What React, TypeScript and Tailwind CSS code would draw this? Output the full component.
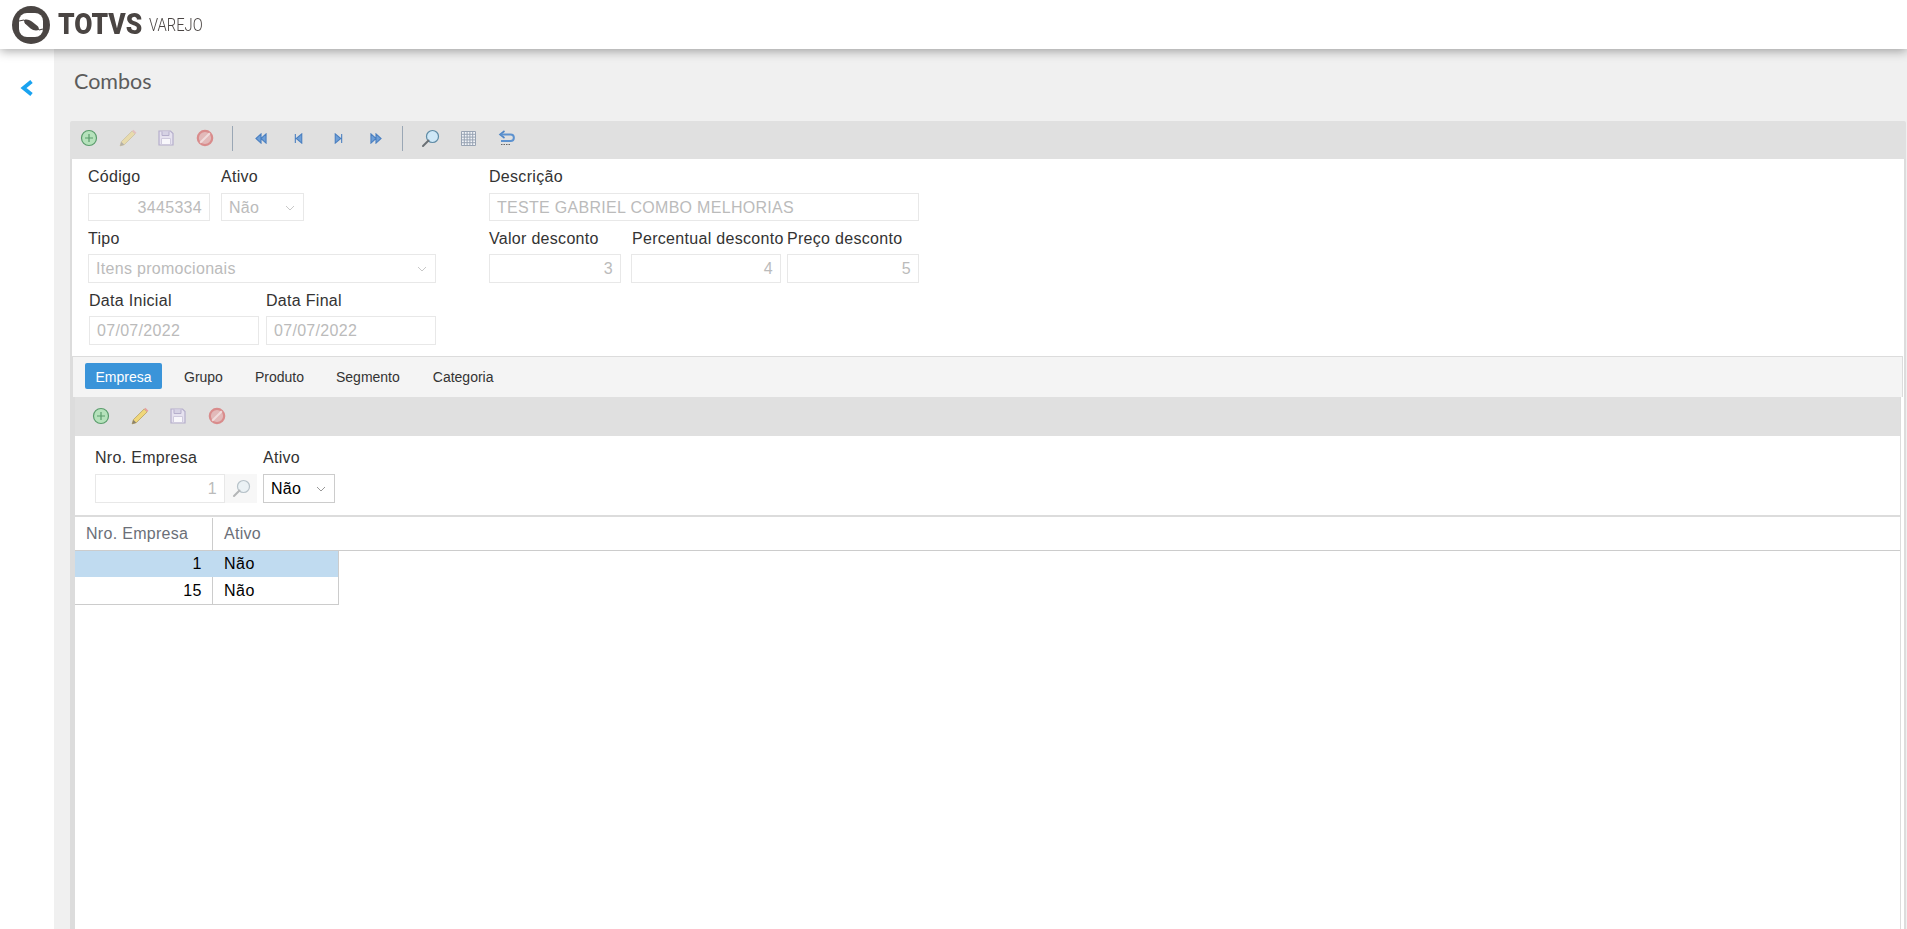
import type { ReactNode } from "react";

const PlusIcon = () => (
  <svg width="18" height="18" viewBox="0 0 18 18">
    <circle cx="9" cy="9" r="7.5" fill="#b5e2bb" stroke="#5a9c6c" strokeWidth="1.2" />
    <path d="M9 5v8M5 9h8" stroke="#5a9c6c" strokeWidth="1.2" />
  </svg>
);

const PencilIcon = ({ faded }: { faded?: boolean }) => (
  <svg width="20" height="20" viewBox="0 0 19 19" className={faded ? "opacity-50" : ""}>
    <path d="M2 17l1.2-4L13.5 2.8l2.8 2.8L6 15.8z" fill="#f0d77a" stroke="#b9a565" strokeWidth="0.8" />
    <path d="M13.5 2.8l1.2-1.2 2.8 2.8-1.2 1.2z" fill="#e8a0a0" />
    <path d="M2 17l1.2-4 2.8 2.8z" fill="#8a8270" />
  </svg>
);

const SaveIcon = () => (
  <svg width="16" height="16" viewBox="0 0 16 16">
    <path d="M1 1h11.5L15 3.5V15H1z" fill="#e6e2ef" stroke="#b5aecb" strokeWidth="1.2" />
    <path d="M4 1.5v4h7v-4" fill="#d6d2e4" stroke="#b5aecb" />
    <path d="M3.5 8.5h9v6h-9z" fill="#f8f7fb" stroke="#cfcadd" />
  </svg>
);

const CancelIcon = () => (
  <svg width="18" height="18" viewBox="0 0 18 18">
    <circle cx="9" cy="9" r="7.2" fill="#e2b9b9" stroke="#d98c8c" strokeWidth="2.2" />
    <path d="M4.2 13.8l9.6-9.6" stroke="#f0dcdc" strokeWidth="2" />
  </svg>
);

const NavIcon = ({ d }: { d: string }) => (
  <svg width="14" height="11" viewBox="0 0 14 12">
    <path d={d} fill="#6e9fd8" stroke="#4a7fc0" strokeWidth="1.2" />
  </svg>
);

const SearchIcon = () => (
  <svg width="19" height="19" viewBox="0 0 19 19">
    <circle cx="11.5" cy="7.5" r="6" fill="#cfe8f7" stroke="#5f8ba5" strokeWidth="1.2" />
    <path d="M7.5 11.5L2 17" stroke="#6a6f74" strokeWidth="2" strokeLinecap="round" />
  </svg>
);

const GridIcon = () => (
  <svg width="15" height="15" viewBox="0 0 15 15">
    <path
      d="M.5.5h14v14H.5zM.5 3.3h14M.5 6.1h14M.5 8.9h14M.5 11.7h14M3.3.5v14M6.1.5v14M8.9.5v14M11.7.5v14"
      fill="#f2f4f8"
      stroke="#98a3b3"
      strokeWidth="1"
    />
  </svg>
);

const UndoIcon = () => (
  <svg width="18" height="16" viewBox="0 0 18 16">
    <path d="M6.5 1L2 4.5 6.5 8" fill="none" stroke="#4f86c6" strokeWidth="1.6" />
    <path d="M2.5 4.5h10c4.5 0 4.5 6.5 0 6.5H3" fill="none" stroke="#5d92cf" strokeWidth="2" />
    <path d="M3 14.5h9" stroke="#666" strokeWidth="1.2" strokeDasharray="1.5 1" />
  </svg>
);

const Chevron = ({ color }: { color: string }) => (
  <svg width="10" height="6" viewBox="0 0 10 6">
    <path d="M1 1l4 4 4-4" fill="none" stroke={color} strokeWidth="1" />
  </svg>
);

const ToolButton = ({ children }: { children: ReactNode }) => (
  <div className="flex h-full w-[38.6px] items-center justify-center">{children}</div>
);

const Separator = ({ className = "mx-2" }: { className?: string }) => (
  <div className={`h-[25px] w-[1px] bg-[#9aa7b5] ${className}`} />
);

const Label = ({ children, className = "h-[33px]" }: { children: ReactNode; className?: string }) => (
  <div className={`flex items-center whitespace-nowrap text-[16px] tracking-[0.3px] text-[#333] ${className}`}>{children}</div>
);

const Input = ({ value, right, className = "h-[28px]" }: { value: string; right?: boolean; className?: string }) => (
  <div
    className={`flex items-center border border-[#e8e8e8] bg-white px-[7px] pt-[1px] text-[16px] tracking-[0.3px] text-[#bbb] ${right ? "justify-end" : ""} ${className}`}
  >
    {value}
  </div>
);

const SelectBox = ({ value, className = "h-[28px]" }: { value: string; className?: string }) => (
  <div className={`flex items-center justify-between border border-[#e8e8e8] bg-white pl-[7px] pr-[8px] pt-[1px] text-[16px] tracking-[0.3px] text-[#bbb] ${className}`}>
    <span>{value}</span>
    <Chevron color="#c8c8c8" />
  </div>
);

export default function App() {
  return (
    <div className="flex h-[929px] w-full flex-col overflow-hidden bg-white font-['Liberation_Sans',sans-serif]">
      <header className="relative z-10 flex h-[49px] items-center bg-white pl-[12px] shadow-[0_2px_10px_rgba(0,0,0,0.35)]">
        <svg width="38" height="38" viewBox="0 0 38 38">
          <circle cx="19" cy="19" r="19" fill="#4a4543" />
          <rect x="7" y="7" width="24" height="24" rx="8" fill="#fff" />
          <path d="M12 14c3-1 6 0 8.500 2l5 4c1 1 1.500 2.500 1.500 4-3 1-6 .5-8.500-1.500l-5-4.500c-1-1-1.500-2.500-1.500-4z" fill="#4a4543" />
          <path d="M7 15l5-1M31 23l-4 1" stroke="#4a4543" strokeWidth="1.2" />
        </svg>
        <span className="ml-[8px] inline-block w-[84px] origin-left scale-x-[0.91] font-['Roboto',sans-serif] text-[29px] font-black leading-none text-[#4a4543]">TOTVS</span>
        <span className="ml-[7px] inline-block w-[54px] origin-left scale-x-[0.82] font-['Roboto',sans-serif] text-[18px] font-light leading-none text-[#4a4543]">VAREJO</span>
      </header>

      <div className="flex min-h-0 flex-1">
        <aside className="w-[54px] bg-white pl-[20px] pt-[31px]">
          <svg width="14" height="16" viewBox="0 0 14 16">
            <path d="M11.5 1.5L3.5 8l8 6.5" fill="none" stroke="#1aa3f0" strokeWidth="3.8" />
          </svg>
        </aside>

        <main className="flex min-w-0 flex-1 flex-col bg-[#f0f0f0] pl-[16px] pr-[1px]">
          <div className="flex h-[72px] items-start pl-[4px] pt-[20px]">
            <h1 className="font-['Lato',sans-serif] text-[21.5px] font-normal leading-[24px] text-[#5c5c5c]">Combos</h1>
          </div>

          <div className="flex min-h-0 flex-1 flex-col">
            <div className="flex h-[38px] items-center rounded-t-[2px] bg-[#e0e0e0] pb-[4px]">
              <ToolButton><PlusIcon /></ToolButton>
              <ToolButton><PencilIcon faded /></ToolButton>
              <ToolButton><SaveIcon /></ToolButton>
              <ToolButton><CancelIcon /></ToolButton>
              <Separator />
              <ToolButton><NavIcon d="M7 1L1.500 6 7 11zM12.500 1L7 6l5.500 5z" /></ToolButton>
              <ToolButton><NavIcon d="M3 1v10M10 1L4 6l6 5z" /></ToolButton>
              <ToolButton><NavIcon d="M11 1v10M4 1l6 5-6 5z" /></ToolButton>
              <ToolButton><NavIcon d="M1.500 1L7 6l-5.500 5zM7 1l5.500 5L7 11z" /></ToolButton>
              <Separator className="ml-[6px] mr-[8px]" />
              <ToolButton><SearchIcon /></ToolButton>
              <ToolButton><GridIcon /></ToolButton>
              <ToolButton><UndoIcon /></ToolButton>
            </div>

            <div className="flex min-h-0 flex-1 flex-col border-x-2 border-[#dcdcdc] bg-white">
              <section className="flex h-[197px] shrink-0 gap-[53px] pl-[16px] pt-[1px]">
                <div className="w-[348px]">
                  <div className="flex gap-[11px]">
                    <div className="w-[122px]">
                      <Label>Código</Label>
                      <Input value="3445334" right />
                    </div>
                    <div className="w-[83px]">
                      <Label>Ativo</Label>
                      <SelectBox value="Não" />
                    </div>
                  </div>
                  <Label className="h-[33px] pt-[3px]">Tipo</Label>
                  <SelectBox value="Itens promocionais" className="h-[29px]" />
                  <div className="ml-[1px] flex gap-[7px]">
                    <div className="w-[170px]">
                      <Label className="h-[33px] pt-[3px]">Data Inicial</Label>
                      <Input value="07/07/2022" className="h-[29px]" />
                    </div>
                    <div className="w-[170px]">
                      <Label className="h-[33px] pt-[3px]">Data Final</Label>
                      <Input value="07/07/2022" className="h-[29px]" />
                    </div>
                  </div>
                </div>

                <div className="w-[430px]">
                  <Label>Descrição</Label>
                  <Input value="TESTE GABRIEL COMBO MELHORIAS" />
                  <div className="flex">
                    <div className="w-[132px]">
                      <Label className="h-[33px] pt-[3px]">Valor desconto</Label>
                      <Input value="3" right className="h-[29px]" />
                    </div>
                    <div className="ml-[10px] w-[150px]">
                      <Label className="h-[33px] pl-[1px] pt-[3px]">Percentual desconto</Label>
                      <Input value="4" right className="h-[29px]" />
                    </div>
                    <div className="ml-[6px] w-[132px]">
                      <Label className="h-[33px] pt-[3px]">Preço desconto</Label>
                      <Input value="5" right className="h-[29px]" />
                    </div>
                  </div>
                </div>
              </section>

              <div className="mr-[1px] flex min-h-0 flex-1 flex-col border-l border-t border-[#dcdcdc]">
                <nav className="flex h-[40px] shrink-0 items-start gap-3 border-r border-[#dcdcdc] bg-[#f4f4f4] pl-[12px] pt-[6px] text-[14px] text-[#333]">
                  <div className="flex h-[26px] w-[77px] items-center justify-center rounded-[2px] bg-[#3a94d9] pt-[2px] text-white">Empresa</div>
                  <div className="flex h-[26px] items-center px-2.5 pt-[2px]">Grupo</div>
                  <div className="flex h-[26px] items-center px-2.5 pt-[2px]">Produto</div>
                  <div className="flex h-[26px] items-center px-2.5 pt-[2px]">Segmento</div>
                  <div className="ml-[1px] flex h-[26px] items-center px-2.5 pt-[2px]">Categoria</div>
                </nav>

                <div className="mr-[2px] flex min-h-0 flex-1 flex-col border-l-2 border-r border-[#dcdcdc]">
                  <div className="flex h-[39px] shrink-0 items-center bg-[#e0e0e0] pb-[2px] pl-[7px]">
                    <ToolButton><PlusIcon /></ToolButton>
                    <ToolButton><PencilIcon /></ToolButton>
                    <ToolButton><SaveIcon /></ToolButton>
                    <ToolButton><CancelIcon /></ToolButton>
                  </div>

                  <div className="flex h-[79px] shrink-0 gap-[6px] pl-[20px] pt-[6px]">
                    <div>
                      <Label className="h-[32px]">Nro. Empresa</Label>
                      <div className="flex">
                        <Input value="1" right className="h-[29px] w-[130px]" />
                        <div className="flex h-[29px] w-[32px] items-center justify-center bg-[#f0f0f0] opacity-50 grayscale-[50%]">
                          <SearchIcon />
                        </div>
                      </div>
                    </div>
                    <div>
                      <Label className="h-[32px]">Ativo</Label>
                      <div className="flex h-[29px] w-[72px] items-center justify-between border border-[#ccc] pl-[7px] pr-[8px] text-[16px] tracking-[0.3px] text-black">
                        <span>Não</span>
                        <Chevron color="#999" />
                      </div>
                    </div>
                  </div>

                  <div className="h-[2px] shrink-0 bg-[#dcdcdc]" />
                  <div className="mt-[1px] flex h-[33px] shrink-0 border-b border-[#ccc] text-[16px] tracking-[0.3px] text-[#6b6f78]">
                    <div className="flex w-[138px] items-center border-r border-[#ccc] pl-[11px]">Nro. Empresa</div>
                    <div className="flex items-center pl-[11px]">Ativo</div>
                  </div>
                  <div className="w-[264px] border-r border-b border-[#ccc] text-[16px] tracking-[0.5px] text-black">
                    <div className="flex h-[26px] bg-[#c0dbf0]">
                      <div className="flex w-[138px] items-center justify-end border-r border-[#c0dbf0] pr-[10px]">1</div>
                      <div className="flex items-center pl-[11px]">Não</div>
                    </div>
                    <div className="flex h-[27px]">
                      <div className="flex w-[138px] items-center justify-end border-r border-[#ccc] pr-[10px]">15</div>
                      <div className="flex items-center pl-[11px]">Não</div>
                    </div>
                  </div>
                </div>
              </div>
            </div>
          </div>
        </main>
      </div>
    </div>
  );
}
